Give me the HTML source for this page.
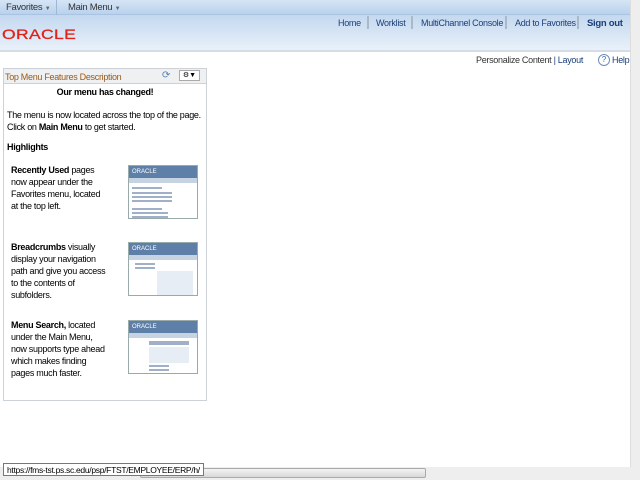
<!DOCTYPE html>
<html><head><style>
*{margin:0;padding:0;box-sizing:border-box}
body{width:640px;height:480px;overflow:hidden;background:#fff;font-family:"Liberation Sans",Arial,sans-serif;font-size:9px;letter-spacing:-0.3px;position:relative}
.a{position:absolute;white-space:nowrap}
.top{left:0;top:0;width:630px;height:15px;background:linear-gradient(#d6e5f5,#b9d2ec);border-bottom:1px solid #a9c3e0}
.hdr{left:0;top:15px;width:630px;height:37px;background:linear-gradient(#c3d8ef,#e9f1fa);border-bottom:2px solid #d4dde6}
.mt{top:2px;color:#333;font-size:9.5px}
.nav{top:18px;font-size:9px;color:#1b3f79}
.sep{top:16px;width:2px;height:13px;background:#aab8c8}
.thumb{left:128px;width:70px;height:54px;border:1px solid #9aa;background:#fff;overflow:hidden}
.thumb .b{position:absolute;left:0;top:0;width:68px;height:12px;background:#5e80a8;color:#fff;font-size:6px;padding:3px 3px;letter-spacing:0}
.thumb .n{position:absolute;left:0;top:12px;width:68px;height:5px;background:#c5d3e2}
.thumb i{position:absolute;height:2px;background:#9fb0c8}
.p{left:11px;line-height:12px;font-size:9px;color:#000}
</style></head><body>
<div class="a top"></div>
<div class="a mt" style="left:6px">Favorites <span style="font-size:6px;color:#666">▼</span></div>
<div class="a" style="left:56px;top:0;width:1px;height:15px;background:#9fb7d3"></div>
<div class="a mt" style="left:68px">Main Menu <span style="font-size:6px;color:#666">▼</span></div>
<div class="a hdr"></div>
<div class="a" style="left:2px;top:26px;color:#e2231a;font-size:14px;letter-spacing:0.3px;transform:scaleX(1.25);transform-origin:left;-webkit-text-stroke:0.3px #e2231a">ORACLE</div>
<div class="a nav" style="left:338px">Home</div>
<div class="a sep" style="left:367px"></div>
<div class="a nav" style="left:376px">Worklist</div>
<div class="a sep" style="left:411px"></div>
<div class="a nav" style="left:421px">MultiChannel Console</div>
<div class="a sep" style="left:505px"></div>
<div class="a nav" style="left:515px">Add to Favorites</div>
<div class="a sep" style="left:577px"></div>
<div class="a nav" style="left:587px;font-weight:bold;font-size:9.5px">Sign out</div>
<div class="a" style="left:476px;top:55px;font-size:9px;color:#333">Personalize Content <span style="color:#1b3f79">| Layout</span></div>
<div class="a" style="left:598px;top:54px;width:12px;height:12px;border:1px solid #6b8fc0;border-radius:50%;color:#3d68a8;font-size:8px;text-align:center;line-height:10px;letter-spacing:0">?</div>
<div class="a" style="left:612px;top:55px;font-size:9px;color:#1b3f79">Help</div>
<div class="a" style="left:3px;top:68px;width:204px;height:333px;border:1px solid #ccd2d8"></div>
<div class="a" style="left:4px;top:69px;width:202px;height:15px;background:#eef0f2;border-bottom:1px solid #ccd2d8"></div>
<div class="a" style="left:5px;top:72px;color:#9b5a18;font-size:9px">Top Menu Features Description</div>
<div class="a" style="left:162px;top:70px;color:#5a7fb0;font-size:10px">⟳</div>
<div class="a" style="left:179px;top:70px;width:21px;height:11px;border:1px solid #aaa;background:#fff;font-size:7px;text-align:center;line-height:9px;letter-spacing:0">⚙▼</div>
<div class="a" style="left:4px;top:87px;width:202px;text-align:center;font-weight:bold">Our menu has changed!</div>
<div class="a" style="left:7px;top:109px;line-height:12px">The menu is now located across the top of the page.<br>Click on <b>Main Menu</b> to get started.</div>
<div class="a" style="left:7px;top:142px;font-weight:bold">Highlights</div>
<div class="a p" style="top:164px"><b>Recently Used</b> pages<br>now appear under the<br>Favorites menu, located<br>at the top left.</div>
<div class="a p" style="top:241px"><b>Breadcrumbs</b> visually<br>display your navigation<br>path and give you access<br>to the contents of<br>subfolders.</div>
<div class="a p" style="top:319px"><b>Menu Search,</b> located<br>under the Main Menu,<br>now supports type ahead<br>which makes finding<br>pages much faster.</div>
<div class="a thumb" style="top:165px"><div class="b">ORACLE</div><div class="n"></div><i style="left:3px;top:21px;width:30px"></i><i style="left:3px;top:26px;width:40px"></i><i style="left:3px;top:30px;width:40px"></i><i style="left:3px;top:34px;width:40px"></i><i style="left:3px;top:42px;width:30px"></i><i style="left:3px;top:46px;width:36px"></i><i style="left:3px;top:50px;width:36px"></i></div>
<div class="a thumb" style="top:242px"><div class="b">ORACLE</div><div class="n"></div><i style="left:6px;top:20px;width:20px"></i><i style="left:6px;top:24px;width:20px"></i><i style="left:28px;top:28px;width:36px;height:24px;background:#e6edf5"></i></div>
<div class="a thumb" style="top:320px"><div class="b">ORACLE</div><div class="n"></div><i style="left:20px;top:20px;width:40px;height:4px"></i><i style="left:20px;top:26px;width:40px;height:16px;background:#e6edf5"></i><i style="left:20px;top:44px;width:20px"></i><i style="left:20px;top:48px;width:20px"></i></div>
<div class="a" style="left:630px;top:0;width:10px;height:467px;background:#eee;border-left:1px solid #ddd"></div>
<div class="a" style="left:0;top:467px;width:640px;height:13px;background:#eee"></div>
<div class="a" style="left:140px;top:468px;width:286px;height:10px;background:linear-gradient(#f4f4f4,#d8d8d8);border:1px solid #aaa;border-radius:2px"></div>
<div class="a" style="left:3px;top:463px;height:13px;border:1px solid #777;background:#fff;font-size:8.5px;padding:1px 3px;color:#000">https://fms-tst.ps.sc.edu/psp/FTST/EMPLOYEE/ERP/h/</div>
</body></html>
